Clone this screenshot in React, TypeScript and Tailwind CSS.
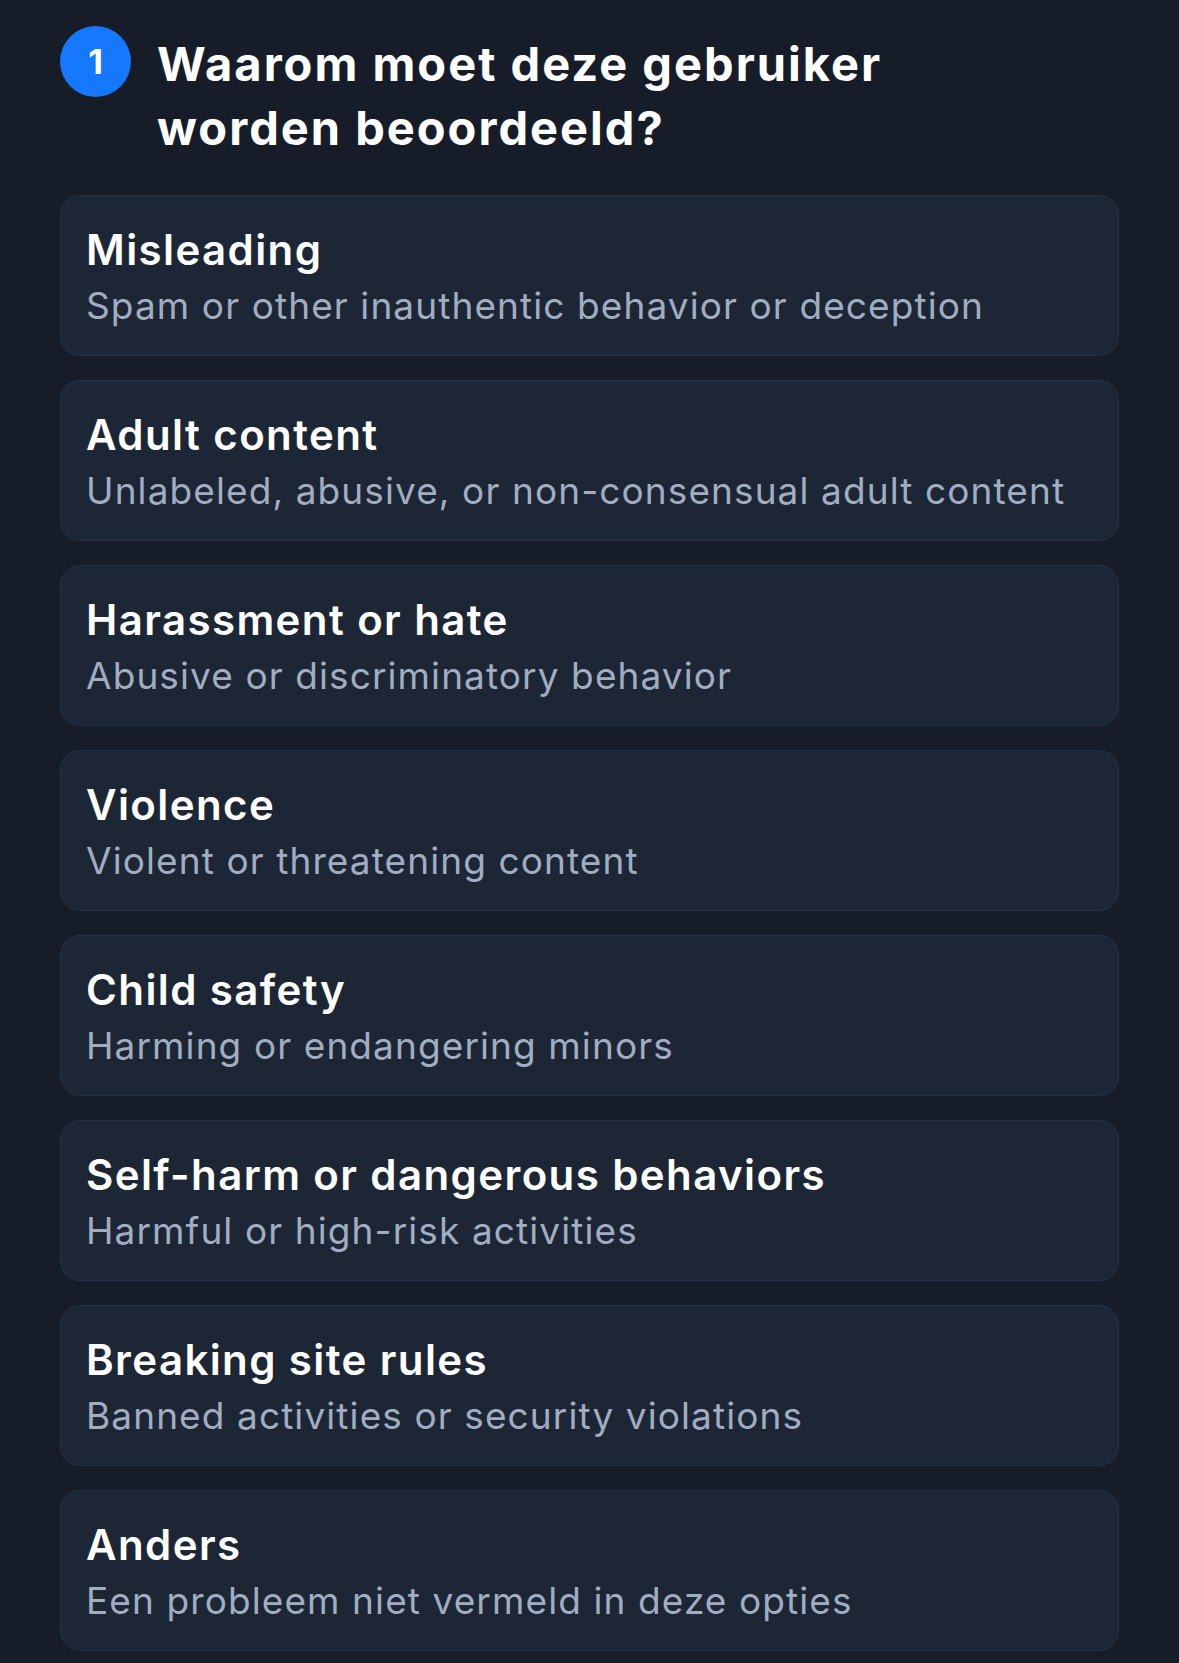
import React from 'react';

interface ReasonOption {
  title: string;
  description: string;
}

const options: ReasonOption[] = [
  { title: 'Misleading', description: 'Spam or other inauthentic behavior or deception' },
  { title: 'Adult content', description: 'Unlabeled, abusive, or non-consensual adult content' },
  { title: 'Harassment or hate', description: 'Abusive or discriminatory behavior' },
  { title: 'Violence', description: 'Violent or threatening content' },
  { title: 'Child safety', description: 'Harming or endangering minors' },
  { title: 'Self-harm or dangerous behaviors', description: 'Harmful or high-risk activities' },
  { title: 'Breaking site rules', description: 'Banned activities or security violations' },
  { title: 'Anders', description: 'Een probleem niet vermeld in deze opties' },
];

const ReasonCard: React.FC<ReasonOption> = ({ title, description }) => {
  return (
    <button
      type="button"
      className="w-full text-left bg-[#1c2635] border border-[#263243] rounded-[20px] px-[25px] pt-[29px] pb-[27px]"
    >
      <p className="text-[42px] leading-[50px] font-semibold tracking-[1.4px] text-white">{title}</p>
      <p className="mt-[8px] text-[37px] leading-[45px] tracking-[1.1px] text-[#a1adc0]">{description}</p>
    </button>
  );
};

export default function App() {
  return (
    <div
      className="min-h-screen bg-[#161d29] px-[60px] pt-[26px] pb-[14px]"
      style={{ fontFamily: 'Inter, "Noto Sans", sans-serif' }}
    >
      <div className="flex items-start gap-[26px]">
        <div className="flex h-[71px] w-[71px] shrink-0 items-center justify-center rounded-full bg-[#1677ff]">
          <span className="text-[34px] font-bold text-white">1</span>
        </div>
        <h1 className="mt-[6px] text-[47px] leading-[64px] font-bold tracking-[2px] text-white">
          Waarom moet deze gebruiker
          <br />
          worden beoordeeld?
        </h1>
      </div>

      <div className="mt-[35px] flex flex-col gap-[24px]">
        {options.map((option) => (
          <ReasonCard key={option.title} {...option} />
        ))}
      </div>
    </div>
  );
}
